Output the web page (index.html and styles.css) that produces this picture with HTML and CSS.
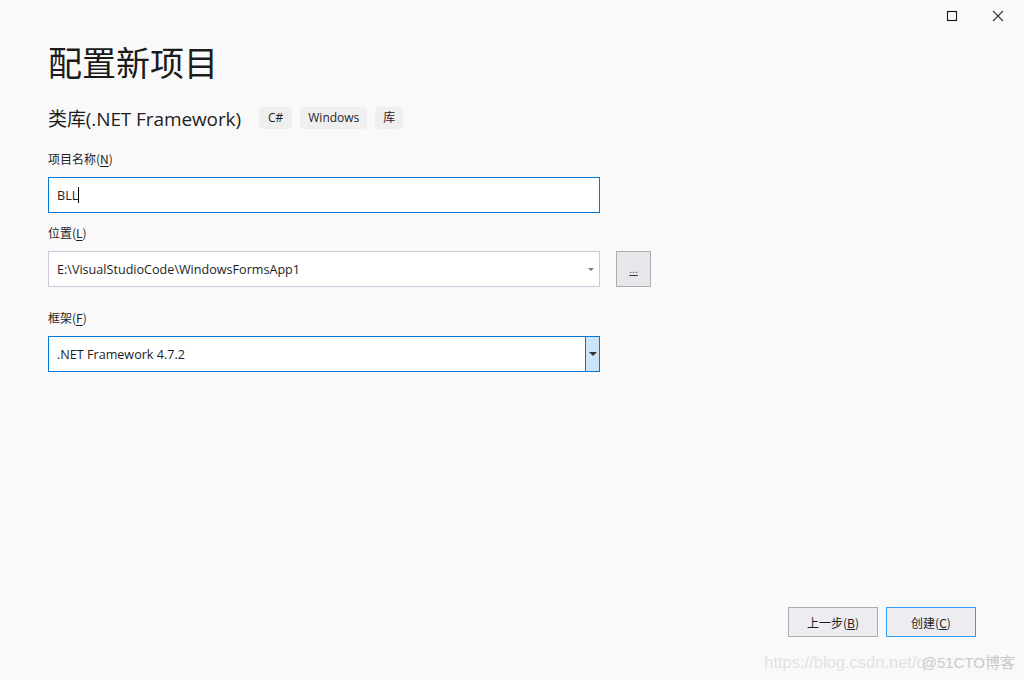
FILE: index.html
```html
<!DOCTYPE html>
<html lang="zh-CN">
<head>
  <meta charset="UTF-8">
  <title>配置新项目</title>
  <link rel="stylesheet" href="styles.css">
</head>
<body>

<div class="window">
  <!-- TITLE BAR -->
  <div class="titlebar">
    <span class="win-btn">
      <svg width="12" height="12" viewBox="0 0 12 12"><rect x="1.5" y="1.5" width="9" height="9" fill="none" stroke="#222" stroke-width="1.2"/></svg>
    </span>
    <span class="win-btn">
      <svg width="12" height="12" viewBox="0 0 12 12"><path d="M1 1 L11 11 M11 1 L1 11" stroke="#333" stroke-width="1.1"/></svg>
    </span>
  </div>

  <div class="content">
    <h1>配置新项目</h1>

    <div class="subtitle">
      <span class="template-name">类库(.NET Framework)</span>
      <span class="tag lang">C#</span>
      <span class="tag">Windows</span>
      <span class="tag">库</span>
    </div>

    <div class="form-group name">
      <label>项目名称(<u>N</u>)</label>
      <div class="input focused">BLL<span class="caret"></span></div>
    </div>

    <div class="form-group location">
      <label>位置(<u>L</u>)</label>
      <div class="row">
        <div class="input combo">
          <span>E:\VisualStudioCode\WindowsFormsApp1</span>
          <span class="arrow small"></span>
        </div>
        <button class="browse"><u>...</u></button>
      </div>
    </div>

    <div class="form-group framework">
      <label>框架(<u>F</u>)</label>
      <div class="input focused select">
        <span class="select-text">.NET Framework 4.7.2</span>
        <span class="select-btn"><span class="arrow"></span></span>
      </div>
    </div>
  </div>

  <!-- FOOTER -->
  <div class="footer">
    <button class="btn">上一步(<u>B</u>)</button>
    <button class="btn primary">创建(<u>C</u>)</button>
  </div>

  <div class="watermark">https://blog.csdn.net/q<span class="wm-dark">@51CTO博客</span></div>
</div>

</body>
</html>
```

FILE: styles.css
```css
body {
  margin: 0;
  background: #f9f9f9;
  font-family: "Open Sans", "Noto Sans", "Noto Sans CJK SC", sans-serif;
  color: #1e1e1e;
}

.window {
  position: relative;
  width: 1024px;
  height: 680px;
  display: flex;
  flex-direction: column;
  overflow: hidden;
}

.titlebar {
  height: 32px;
  display: flex;
  justify-content: flex-end;
  align-items: flex-start;
}

.win-btn {
  width: 46px;
  height: 32px;
  display: flex;
  justify-content: center;
  align-items: center;
}

.win-btn + .win-btn {
  margin-right: 3px;
}

.content {
  padding: 0 48px;
  flex: 1;
}

h1 {
  margin: 6px 0 0;
  font-family: "Noto Sans CJK SC", sans-serif;
  font-size: 34px;
  font-weight: 400;
  line-height: 48px;
  color: #1b1b1b;
}

.subtitle {
  display: flex;
  align-items: center;
  margin-top: 20px;
  height: 24px;
}

.template-name {
  font-family: "Open Sans", "Noto Sans CJK SC", sans-serif;
  font-size: 19px;
  margin-right: 18px;
  letter-spacing: -0.1px;
}

.tag {
  background: #efefef;
  border-radius: 4px;
  font-size: 12px;
  height: 22px;
  line-height: 22px;
  padding: 0 8px;
  margin-right: 8px;
}

.tag.lang {
  padding: 0 9px;
}

.form-group label {
  display: block;
  font-size: 12px;
  line-height: 16px;
  margin-bottom: 10px;
  font-family: "Noto Sans CJK SC", sans-serif;
}

.form-group u {
  text-underline-offset: 2px;
}

.name {
  margin-top: 21px;
}

.location {
  margin-top: 12px;
}

.framework {
  margin-top: 23px;
}

.input {
  box-sizing: border-box;
  width: 552px;
  height: 36px;
  background: #fff;
  border: 1px solid #ccc9dc;
  display: flex;
  align-items: center;
  padding-left: 8px;
  font-size: 12.6px;
}

.input.focused {
  border-color: #0078d7;
}

.caret {
  display: inline-block;
  width: 1px;
  height: 16px;
  background: #000;
}

.row {
  display: flex;
  gap: 16px;
}

.combo {
  justify-content: space-between;
  padding-right: 5px;
}

.arrow {
  width: 0;
  height: 0;
  border-left: 4px solid transparent;
  border-right: 4px solid transparent;
  border-top: 4px solid #333;
}

.arrow.small {
  border-left-width: 3px;
  border-right-width: 3px;
  border-top: 3px solid #777;
}

.browse {
  box-sizing: border-box;
  width: 35px;
  height: 36px;
  background: #e6e6eb;
  border: 1px solid #adadad;
  font-size: 10px;
  padding: 0;
  color: #333;
}

.select {
  padding-left: 0;
  align-items: stretch;
}

.select-text {
  flex: 1;
  display: flex;
  align-items: center;
  padding-left: 8px;
}

.select-btn {
  width: 13px;
  background: #cce4f7;
  border-left: 1px solid #0078d7;
  display: flex;
  justify-content: center;
  align-items: center;
}

.footer {
  display: flex;
  justify-content: flex-end;
  gap: 8px;
  padding: 0 48px 43px 0;
}

.btn {
  box-sizing: border-box;
  width: 90px;
  height: 30px;
  background: #ececf1;
  border: 1px solid #adadad;
  font-family: "Noto Sans CJK SC", sans-serif;
  font-size: 12px;
  color: #1e1e1e;
  padding: 0;
}

.btn.primary {
  border-color: #3399ff;
}

.watermark {
  position: absolute;
  right: 9px;
  bottom: 8px;
  font-family: "Liberation Sans", "Noto Sans CJK SC", sans-serif;
  font-size: 16.5px;
  color: #e2e2e2;
  white-space: nowrap;
}

.wm-dark {
  color: #c9c9c9;
  font-size: 15px;
  margin-left: -4px;
}
```
